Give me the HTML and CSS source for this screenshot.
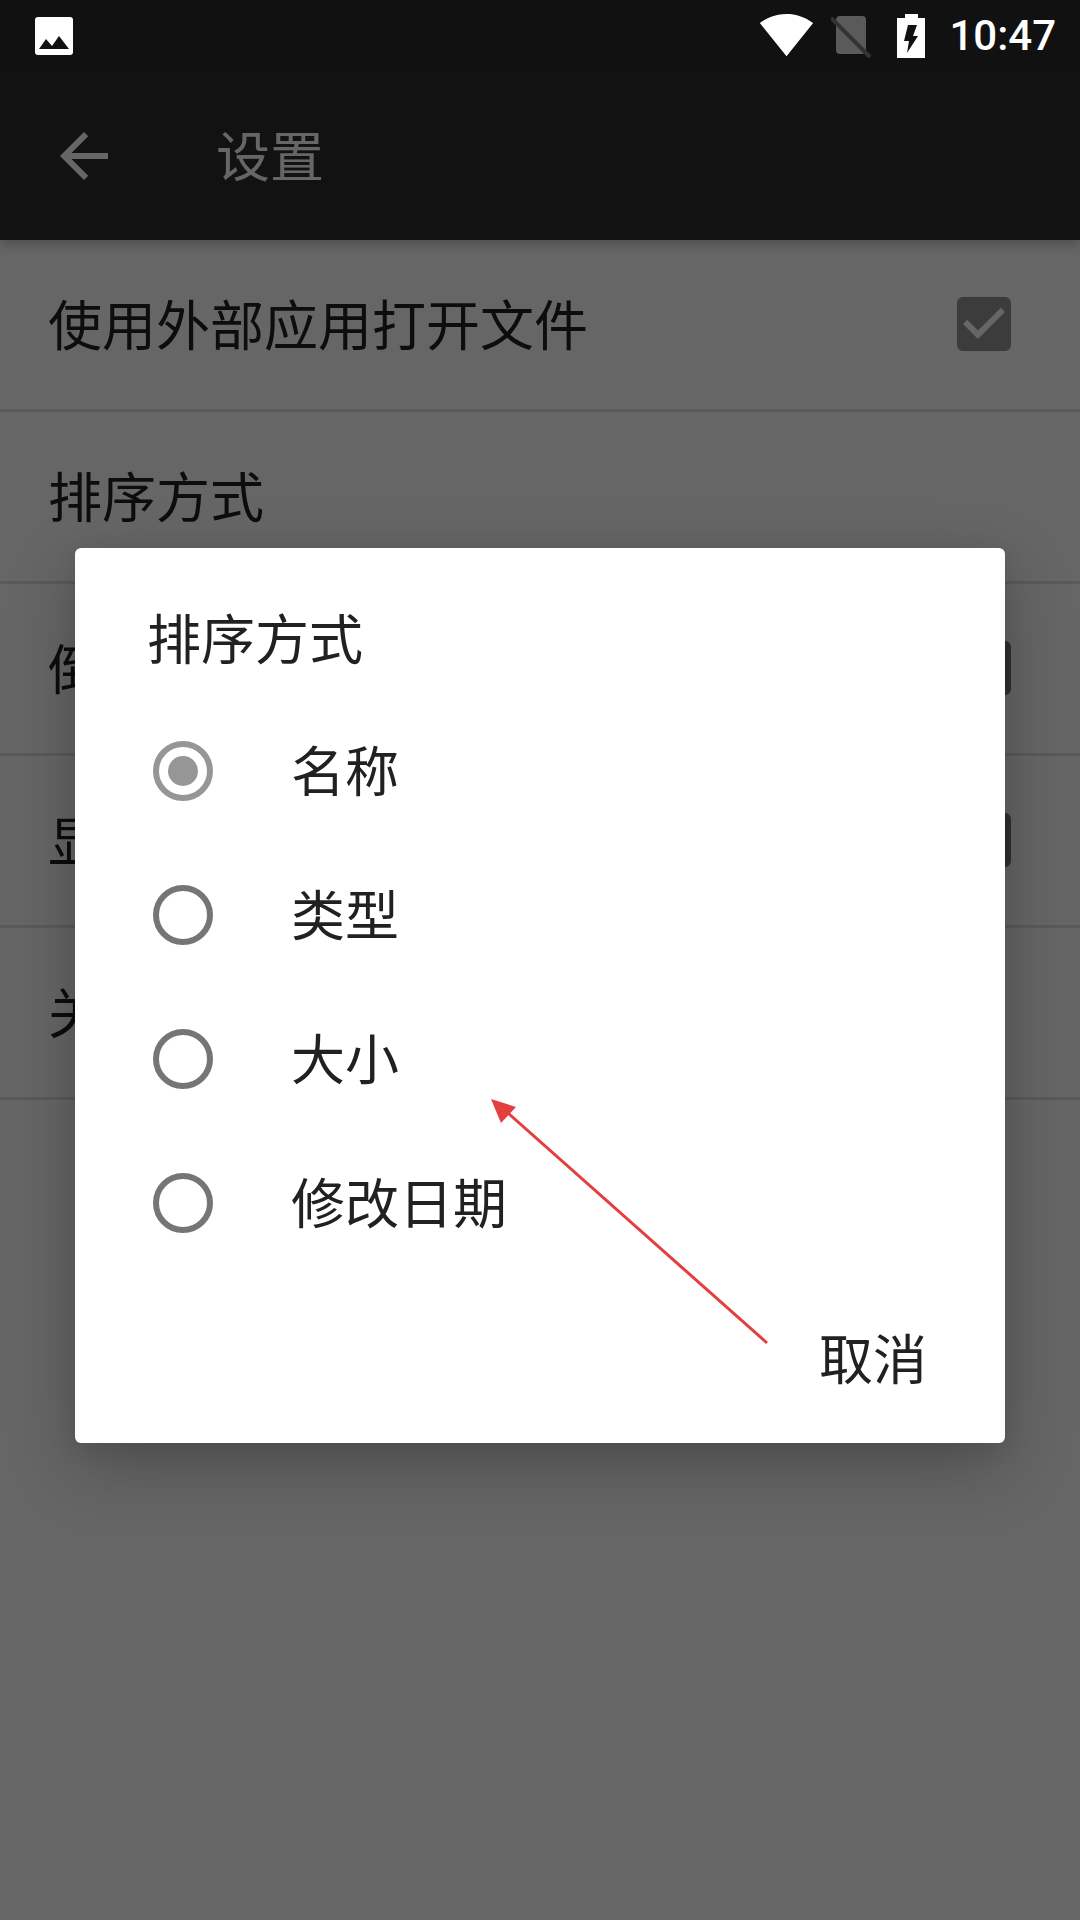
FILE: index.html
```html
<!DOCTYPE html>
<html lang="zh-CN">
<head>
<meta charset="utf-8">
<title>设置</title>
<link rel="stylesheet" href="styles.css">
</head>
<body>
<div class="screen">
  <header class="status-bar">
    <svg class="ic-image" viewBox="0 0 38 38"><path class="white" d="M3 0h32a3 3 0 0 1 3 3v32a3 3 0 0 1-3 3H3a3 3 0 0 1-3-3V3a3 3 0 0 1 3-3z"/><path class="dark" d="M4 32L11 22 17 29 24 19 34 32z"/></svg>
    <div class="status-right">
      <svg class="ic-wifi" viewBox="0 0 24 24"><path class="white" d="M12.01 21.49L23.64 7c-.45-.34-4.93-4-11.64-4C5.28 3 .81 6.66.36 7l11.64 14.49z"/></svg>
      <svg class="ic-sim" viewBox="0 0 42 46"><rect class="sim" x="5" y="2" width="30" height="38" rx="4"/><path class="sim-slash" d="M0 4L39 43"/></svg>
      <svg class="ic-battery" viewBox="0 0 28 44"><path class="white" d="M8 0h13v4h7v40H0V4h8z"/><path class="dark" d="M11 11h9l-4 11h5L10 39l2-12H7z"/></svg>
      <span class="clock">10:47</span>
    </div>
  </header>
  <div class="toolbar">
    <svg class="back" viewBox="0 0 24 24"><path d="M20 11H7.83l5.59-5.59L12 4l-8 8 8 8 1.41-1.41L7.83 13H20v-2z"/></svg>
    <span class="toolbar-title">设置</span>
  </div>
  <main class="settings">
    <div class="row"><span>使用外部应用打开文件</span><svg class="check" viewBox="0 0 24 24"><path d="M19 3H5c-1.11 0-2 .9-2 2v14c0 1.1.89 2 2 2h14c1.11 0 2-.9 2-2V5c0-1.1-.89-2-2-2zm-9 14l-5-5 1.41-1.41L10 14.17l7.59-7.59L19 8l-9 9z"/></svg></div>
    <div class="row"><span>排序方式</span></div>
    <div class="row"><span>倒序排列</span><svg class="check check-dim" viewBox="0 0 24 24"><path d="M19 3H5c-1.11 0-2 .9-2 2v14c0 1.1.89 2 2 2h14c1.11 0 2-.9 2-2V5c0-1.1-.89-2-2-2zm-9 14l-5-5 1.41-1.41L10 14.17l7.59-7.59L19 8l-9 9z"/></svg></div>
    <div class="row"><span>显示隐藏文件</span><svg class="check check-dim" viewBox="0 0 24 24"><path d="M19 3H5c-1.11 0-2 .9-2 2v14c0 1.1.89 2 2 2h14c1.11 0 2-.9 2-2V5c0-1.1-.89-2-2-2zm-9 14l-5-5 1.41-1.41L10 14.17l7.59-7.59L19 8l-9 9z"/></svg></div>
    <div class="row"><span>关于</span></div>
  </main>
  <div class="scrim"></div>
  <section class="dialog">
    <h2 class="dialog-title">排序方式</h2>
    <div class="option"><span class="radio selected"></span><span class="option-label">名称</span></div>
    <div class="option"><span class="radio"></span><span class="option-label">类型</span></div>
    <div class="option"><span class="radio"></span><span class="option-label">大小</span></div>
    <div class="option"><span class="radio"></span><span class="option-label">修改日期</span></div>
    <div class="actions"><span class="action">取消</span></div>
  </section>
  <svg class="annotation" viewBox="0 0 1080 1920"><path class="arrow-line" d="M767 1343L508 1113"/><path class="arrow-head" d="M491 1099L516 1107 501 1123z"/></svg>
</div>
</body>
</html>
```

FILE: styles.css
```css
* { box-sizing: border-box; }
html, body { margin: 0; padding: 0; }
body { background: #fff; font-family: "Noto Sans CJK SC", "Noto Sans", sans-serif; color: #212121; }
.screen { position: relative; width: 1080px; height: 1920px; overflow: hidden; background: #fff; }

.status-bar { position: relative; z-index: 3; height: 72px; background: #111; display: flex; justify-content: space-between; align-items: center; padding: 0 24px 0 35px; }
.white { fill: #fff; }
.dark { fill: #111; }
.ic-image { width: 38px; height: 38px; display: block; }
.status-right { display: flex; align-items: center; }
.ic-wifi { width: 55px; height: 55px; display: block; margin-top: -3px; }
.ic-sim { width: 42px; height: 46px; display: block; margin-left: 17px; margin-top: 1px; }
.sim { fill: #5a5a5a; }
.sim-slash { stroke: #333; stroke-width: 4; fill: none; }
.ic-battery { width: 28px; height: 44px; display: block; margin-left: 24px; margin-top: -1px; }
.clock { font-family: Roboto, sans-serif; font-size: 42px; font-weight: 500; color: #fff; margin-left: 24px; line-height: 72px; }

.toolbar { height: 168px; background: #2e2e2e; display: flex; align-items: center; padding-left: 48px; color: #fff; box-shadow: 0 6px 10px rgba(0,0,0,.2); position: relative; }
.back { width: 72px; height: 72px; fill: #fff; display: block; }
.toolbar-title { font-size: 54px; margin-left: 96px; margin-bottom: 4px; line-height: 72px; }

.row { height: 172px; border-bottom: 3px solid #e0e0e0; display: flex; align-items: center; justify-content: space-between; padding: 0 60px 4px 48px; font-size: 54px; color: #212121; }
.check { width: 72px; height: 72px; fill: #969696; display: block; margin-top: 3px; }
.check-dim { fill: #7c7c7c; }

.scrim { position: absolute; inset: 0; background: rgba(0,0,0,.6); z-index: 1; }

.dialog { position: absolute; z-index: 2; left: 75px; top: 548px; width: 930px; height: 895px; background: #fff; border-radius: 6px; box-shadow: 0 24px 70px rgba(0,0,0,.24), 0 6px 24px rgba(0,0,0,.07); display: flex; flex-direction: column; font-size: 54px; color: #212121; }
.dialog-title { margin: 0; height: 151px; padding: 45px 0 0 72px; font-size: 54px; font-weight: 400; line-height: 88px; }
.option { height: 144px; display: flex; align-items: center; padding-left: 78px; gap: 78px; }
.option-label { margin-top: -5px; }
.radio { width: 60px; height: 60px; border: 6px solid #757575; border-radius: 50%; display: flex; align-items: center; justify-content: center; flex: none; }
.radio.selected { border-color: #969696; }
.radio.selected::after { content: ""; width: 30px; height: 30px; border-radius: 50%; background: #969696; }
.actions { flex: 1; display: flex; justify-content: flex-end; align-items: center; padding: 0 78px 5px 0; }

.annotation { position: absolute; inset: 0; z-index: 4; width: 1080px; height: 1920px; pointer-events: none; }
.arrow-line { stroke: #e53e3e; stroke-width: 3; fill: none; }
.arrow-head { fill: #e53e3e; }
```
